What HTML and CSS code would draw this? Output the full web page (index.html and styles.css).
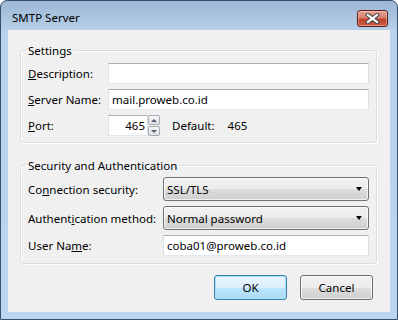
FILE: index.html
```html
<!DOCTYPE html>
<html>
<head>
  <title>SMTP Server</title>
  <link rel="stylesheet" href="styles.css">
</head>
<body>
  <div class="window">
    <div class="titlebar">
      <span class="title">SMTP Server</span>
      <div class="close">
        <svg width="15" height="11" viewBox="0 0 15 11">
          <path d="M3 2 L12 9 M12 2 L3 9" stroke="#4a4a56" stroke-width="4.2" stroke-linecap="square"/>
          <path d="M3 2 L12 9 M12 2 L3 9" stroke="#ffffff" stroke-width="2.2" stroke-linecap="square"/>
        </svg>
      </div>
    </div>

    <div class="client">
      <fieldset class="group settings">
        <legend>Settings</legend>
        <div class="row">
          <label><u>D</u>escription:</label>
          <input type="text" class="text wide" value="">
        </div>
        <div class="row">
          <label><u>S</u>erver Name:</label>
          <input type="text" class="text wide" value="mail.proweb.co.id">
        </div>
        <div class="row">
          <label><u>P</u>ort:</label>
          <input type="text" class="text port" value="465">
          <div class="spinner">
            <div class="spin up"><span></span></div>
            <div class="spin down"><span></span></div>
          </div>
          <span class="default-label">Default:</span>
          <span class="default-value">465</span>
        </div>
      </fieldset>

      <fieldset class="group security">
        <legend>Security and Authentication</legend>
        <div class="row">
          <label>Co<u>n</u>nection security:</label>
          <div class="combo"><span>SSL/TLS</span><span class="arrow"></span></div>
        </div>
        <div class="row">
          <label>Authent<u>i</u>cation method:</label>
          <div class="combo"><span>Normal password</span><span class="arrow"></span></div>
        </div>
        <div class="row">
          <label>User Na<u>m</u>e:</label>
          <input type="text" class="text wide" value="coba01@proweb.co.id">
        </div>
      </fieldset>

      <div class="buttons">
        <button class="btn default">OK</button>
        <button class="btn">Cancel</button>
      </div>
    </div>
  </div>
</body>
</html>
```

FILE: styles.css
```css
body {
  margin: 0;
  background-color: #ffffff;
  font-family: "Noto Sans", "Open Sans", sans-serif;
  font-size: 11.5px;
  color: #000;
}

.window {
  width: 398px;
  height: 320px;
  box-sizing: border-box;
  border: 1px solid #34506e;
  border-radius: 7px 7px 0 0;
  background: linear-gradient(to bottom, #9db8d5 0px, #afc8e2 20px, #bad2eb 32px, #bcd4ed 100%);
  display: flex;
  flex-direction: column;
}

.titlebar {
  height: 29px;
  display: flex;
  align-items: flex-start;
  justify-content: space-between;
}

.title {
  margin-left: 11px;
  margin-top: 9px;
  line-height: 16px;
  font-size: 11.5px;
}

.close {
  width: 29px;
  height: 15px;
  margin-top: 9px;
  margin-right: 9px;
  border: 1px solid #5b1f20;
  border-radius: 3px;
  background: linear-gradient(to bottom, #e6a494 0%, #d4806b 45%, #c0432c 55%, #c95a3f 100%);
  box-shadow: inset 0 0 0 1px rgba(255, 210, 200, 0.5);
  display: flex;
  align-items: center;
  justify-content: center;
}

.close svg {
  display: block;
}

.client {
  height: 282px;
  margin: 0 7px;
  background-color: #f0f0f0;
  box-sizing: border-box;
  padding: 13px 13px 0 12px;
  display: flex;
  flex-direction: column;
}

.group {
  margin: 0;
  border: 1px solid #d5dfe5;
  border-radius: 3px;
  box-shadow: 1px 1px 0 #ffffff, inset 1px 1px 0 #ffffff;
  padding: 5px 7px 6px 7px;
  display: flex;
  flex-direction: column;
  gap: 5px;
}

.group legend {
  padding: 0 2px;
  margin-left: -2px;
  line-height: 15px;
}

.security {
  margin-top: 15px;
  padding-top: 4px;
  padding-bottom: 7px;
}

.row {
  display: flex;
  align-items: center;
}

.settings label {
  width: 80px;
}

.security label {
  width: 135px;
}

.text {
  height: 21px;
  box-sizing: border-box;
  margin: 0;
  padding: 0 3px;
  border: 1px solid #dbdfe6;
  border-top-color: #abadb3;
  border-bottom-color: #e3e9ef;
  border-radius: 0;
  background-color: #fff;
  font-family: inherit;
  font-size: 11.5px;
  color: #000;
  outline: none;
}

.wide {
  flex: 1;
  min-width: 0;
}

.port {
  width: 40px;
  text-align: right;
  padding-right: 2px;
}

.spinner {
  width: 12px;
  height: 21px;
  display: flex;
  flex-direction: column;
  gap: 1px;
}

.spin {
  flex: 1;
  box-sizing: border-box;
  border: 1px solid #a5acb5;
  border-radius: 2px;
  background: linear-gradient(to bottom, #f7f7f7, #e3e3e3);
  display: flex;
  align-items: center;
  justify-content: center;
}

.spin span {
  width: 0;
  height: 0;
  border-left: 3px solid transparent;
  border-right: 3px solid transparent;
}

.up span {
  border-bottom: 3px solid #4c607a;
}

.down span {
  border-top: 3px solid #4c607a;
}

.default-label {
  margin-left: 12px;
}

.default-value {
  margin-left: 13px;
}

.combo {
  flex: 1;
  height: 24px;
  box-sizing: border-box;
  border: 1px solid #707070;
  border-radius: 3px;
  background: linear-gradient(to bottom, #f2f2f2 0%, #ebebeb 50%, #dddddd 51%, #cfcfcf 100%);
  box-shadow: inset 0 0 0 1px rgba(255, 255, 255, 0.7);
  display: flex;
  align-items: center;
  justify-content: space-between;
  padding: 0 6px 0 3px;
}

.combo .arrow {
  width: 0;
  height: 0;
  border-left: 3.5px solid transparent;
  border-right: 3.5px solid transparent;
  border-top: 4px solid #000;
}

.buttons {
  display: flex;
  justify-content: flex-end;
  gap: 13px;
  margin-top: 11px;
  padding-right: 4px;
}

.btn {
  width: 73px;
  height: 25px;
  border: 1px solid #707070;
  border-radius: 3px;
  background: linear-gradient(to bottom, #f2f2f2 0%, #ebebeb 50%, #dddddd 51%, #cfcfcf 100%);
  box-shadow: inset 0 0 0 1px rgba(255, 255, 255, 0.7);
  font-family: inherit;
  font-size: 11.5px;
  color: #000;
  padding: 0;
}

.btn.default {
  border-color: #3c7fb1;
  background: linear-gradient(to bottom, #eaf6fd 0%, #d9f0fc 50%, #bee6fd 51%, #a7d9f5 100%);
  box-shadow: inset 0 0 0 1px #a8e0f4;
}
```
